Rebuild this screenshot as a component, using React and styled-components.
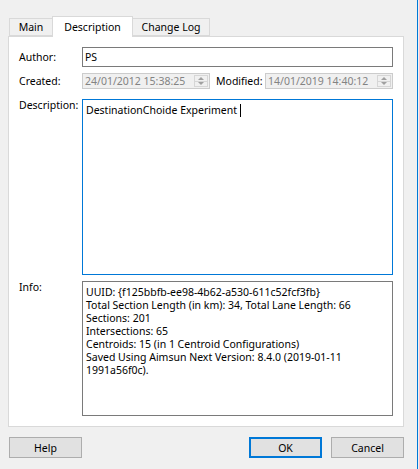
import styled, { createGlobalStyle } from 'styled-components';

const GlobalStyle = createGlobalStyle`
  html, body {
    margin: 0;
    padding: 0;
    background: #f0f0f0;
  }
  body {
    font-family: "Noto Sans", "DejaVu Sans", sans-serif;
    font-size: 10.5px;
    color: #000;
  }
`;

const Dialog = styled.div`
  width: 418px;
  height: 469px;
  box-sizing: border-box;
  border-right: 1px solid #0078d7;
  padding: 16px 13px 0 8px;
  display: flex;
  flex-direction: column;
`;

const TabBar = styled.div`
  display: flex;
  align-items: flex-end;
  height: 20px;
  padding-left: 1px;
  position: relative;
  z-index: 1;
`;

const Tab = styled.div`
  width: ${p => p.$w}px;
  height: ${p => (p.$active ? '21px' : '18px')};
  box-sizing: border-box;
  margin-bottom: ${p => (p.$active ? '-1px' : '0')};
  margin-left: ${p => (p.$first ? '0' : '-1px')};
  border: 1px solid #d9d9d9;
  border-bottom: ${p => (p.$active ? 'none' : '1px solid #d9d9d9')};
  background: ${p => (p.$active ? '#fff' : '#f0f0f0')};
  display: flex;
  align-items: center;
  justify-content: center;
  padding-bottom: ${p => (p.$active ? '1px' : '0')};
  z-index: ${p => (p.$active ? 2 : 0)};
  white-space: nowrap;
`;

const Pane = styled.div`
  height: 391px;
  box-sizing: border-box;
  border: 1px solid #d9d9d9;
  background: #fff;
  padding: 10px;
  display: grid;
  grid-template-columns: 63px 1fr;
  align-content: start;
`;

const Label = styled.div`
  margin-top: ${p => p.$mt || 0}px;
  line-height: ${p => p.$lh || 20}px;
  white-space: nowrap;
`;

const TextInput = styled.div`
  height: 20px;
  box-sizing: border-box;
  border: 1px solid #7a7a7a;
  background: #fff;
  padding: 0 2px;
  line-height: 18px;
`;

const DateRow = styled.div`
  margin-top: 6px;
  display: grid;
  grid-template-columns: 128px 1fr 128px;
  align-items: center;
`;

const SpinBox = styled.div`
  height: 16px;
  box-sizing: border-box;
  border: 1px solid #cccccc;
  background: #f0f0f0;
  display: flex;
  color: #838383;
`;

const SpinText = styled.div`
  flex: 1;
  min-width: 0;
  overflow: hidden;
  padding-left: 2px;
  line-height: 14px;
  white-space: nowrap;
`;

const SpinButtons = styled.div`
  flex-shrink: 0;
  width: 14px;
  margin: 1px 1px 1px 0;
  border: 1px solid #d6d6d6;
  box-sizing: border-box;
  display: flex;
  flex-direction: column;
`;

const SpinHalf = styled.div`
  flex: 1;
  display: flex;
  align-items: center;
  justify-content: center;
  border-top: ${p => (p.$down ? '1px solid #d6d6d6' : 'none')};
`;

const Arrow = styled.div`
  width: 0;
  height: 0;
  border-left: 3px solid transparent;
  border-right: 3px solid transparent;
  ${p => (p.$down ? 'border-top: 3px solid #a0a0a0;' : 'border-bottom: 3px solid #a0a0a0;')}
`;

const InlineLabel = styled.div`
  padding-left: 6px;
  white-space: nowrap;
`;

const TextArea = styled.div`
  margin-top: ${p => p.$mt || 0}px;
  height: ${p => p.$h}px;
  box-sizing: border-box;
  border: 1px solid ${p => (p.$focused ? '#0078d7' : '#7a7a7a')};
  background: #fff;
  padding: 4px 3px;
  line-height: 13px;
`;

const Caret = styled.span`
  display: inline-block;
  width: 1px;
  height: 13px;
  background: #000;
  vertical-align: -3px;
  margin-left: 3px;
`;

const ButtonRow = styled.div`
  display: flex;
  margin-top: 10px;
  gap: 9px;
  padding-left: 1px;
`;

const Button = styled.div`
  width: 73px;
  height: 21px;
  box-sizing: border-box;
  border: ${p => (p.$default ? '2px solid #0078d7' : '1px solid #adadad')};
  background: #e1e1e1;
  display: flex;
  align-items: center;
  justify-content: center;
  margin-left: ${p => (p.$push ? 'auto' : '0')};
`;

const Spin = ({ value }) => (
  <SpinBox>
    <SpinText>{value}</SpinText>
    <SpinButtons>
      <SpinHalf><Arrow /></SpinHalf>
      <SpinHalf $down><Arrow $down /></SpinHalf>
    </SpinButtons>
  </SpinBox>
);

const infoLines = [
  'UUID: {f125bbfb-ee98-4b62-a530-611c52fcf3fb}',
  'Total Section Length (in km): 34, Total Lane Length: 66',
  'Sections: 201',
  'Intersections: 65',
  'Centroids: 15 (in 1 Centroid Configurations)',
  'Saved Using Aimsun Next Version: 8.4.0 (2019-01-11',
  '1991a56f0c).',
];

export default function App() {
  return (
    <>
      <GlobalStyle />
      <Dialog>
        <TabBar>
          <Tab $first $w={44}>Main</Tab>
          <Tab $active $w={81}>Description</Tab>
          <Tab $w={78}>Change Log</Tab>
        </TabBar>
        <Pane>
          <Label>Author:</Label>
          <TextInput>PS</TextInput>

          <Label $mt={6} $lh={16}>Created:</Label>
          <DateRow>
            <Spin value="24/01/2012 15:38:25" />
            <InlineLabel>Modified:</InlineLabel>
            <Spin value="14/01/2019 14:40:12" />
          </DateRow>

          <Label $mt={10} $lh={13}>Description:</Label>
          <TextArea $mt={10} $h={176} $focused>
            DestinationChoide Experiment<Caret />
          </TextArea>

          <Label $mt={6} $lh={13}>Info:</Label>
          <TextArea $mt={6} $h={135}>
            {infoLines.map(line => (
              <div key={line}>{line}</div>
            ))}
          </TextArea>
        </Pane>
        <ButtonRow>
          <Button>Help</Button>
          <Button $push $default>OK</Button>
          <Button>Cancel</Button>
        </ButtonRow>
      </Dialog>
    </>
  );
}
